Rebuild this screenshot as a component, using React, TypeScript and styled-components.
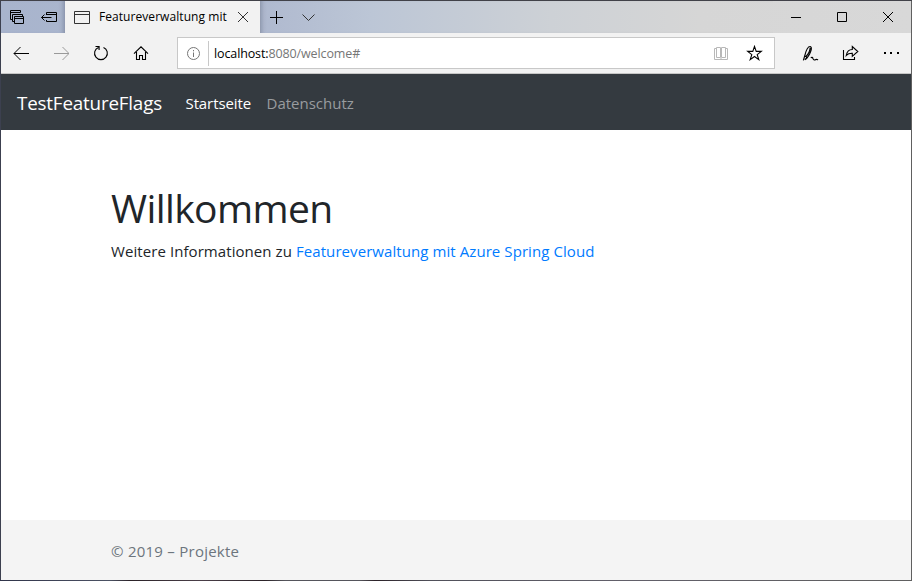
import React from "react";
import styled, { createGlobalStyle } from "styled-components";

const GlobalStyle = createGlobalStyle`
  * { box-sizing: border-box; }
  body {
    margin: 0;
    font-family: "Segoe UI", "Open Sans", "Noto Sans", sans-serif;
    color: #212529;
    background: #fff;
  }
`;

const BrowserWindow = styled.div`
  width: 912px;
  height: 581px;
  display: flex;
  flex-direction: column;
  padding: 1px;
  overflow: hidden;
  background:
    linear-gradient(#3e3f48, #44444a) top / 100% 1px no-repeat,
    linear-gradient(90deg, #30344a 0, #4c5264 110px, #2b2228 130px, #4a3f48 200px, #2b2228 265px, #55555c 285px, #55555c 360px, #2b2228 375px, #50505a 430px, #62606a 620px, #606060 100%) bottom / 100% 1px no-repeat,
    linear-gradient(90deg, #3c404f 50%, #606060 50%);
`;

const TitleBar = styled.header`
  height: 32px;
  flex: none;
  display: flex;
  background: linear-gradient(90deg, #a8b4cd 0, #afb9cf 260px, #bcc6d6 370px, #cdd1d6 550px, #d6d6d6 700px, #d8d8d8 100%);
`;

const TabActions = styled.div`
  width: 64px;
  display: flex;
  box-shadow: inset -5px 0 5px -4px rgba(40, 50, 70, 0.35);
`;

const IconCell = styled.span<{ $width: number; $color?: string }>`
  width: ${(p) => p.$width}px;
  flex: none;
  display: flex;
  align-items: center;
  justify-content: center;
  color: ${(p) => p.$color ?? "#000"};
  svg { display: block; flex: none; }
`;

const Tab = styled.div`
  width: 195px;
  display: flex;
  align-items: center;
  background: #f2f2f2;
`;

const TabTitle = styled.span`
  width: 130px;
  font-size: 12px;
  line-height: 16px;
  letter-spacing: 0.06px;
  white-space: nowrap;
  color: #000;
`;

const NewTabArea = styled.div`
  flex: 1;
  display: flex;
  box-shadow: inset 5px 0 5px -4px rgba(40, 50, 70, 0.35);
`;

const ToolBar = styled.div`
  height: 41px;
  flex: none;
  display: flex;
  align-items: center;
  background: #f2f2f2;
  border-bottom: 1px solid #c6c6c6;
`;

const NavButtons = styled.div`
  width: 176px;
  display: flex;
`;

const AddressBar = styled.div`
  width: 598px;
  height: 32px;
  display: flex;
  align-items: center;
  background: #fff;
  border: 1px solid #c8c8c8;
`;

const Divider = styled.span`
  width: 1px;
  height: 25px;
  background: #c8c8c8;
`;

const Url = styled.span`
  flex: 1;
  padding: 2px 0 0 5px;
  font-size: 12.5px;
  line-height: 18px;
  letter-spacing: -0.12px;
  color: #767676;
  white-space: nowrap;
`;

const Host = styled.span`
  color: #000;
`;

const Tools = styled.div`
  flex: 1;
  display: flex;
  padding-left: 15px;
`;

const NavBar = styled.nav`
  height: 56px;
  flex: none;
  display: flex;
  align-items: center;
  padding: 2px 0 0 16px;
  background: #343a40;
`;

const Brand = styled.span`
  width: 168.5px;
  font-size: 18.8px;
  line-height: 30px;
  letter-spacing: -0.17px;
  color: #fff;
`;

const NavLink = styled.span<{ $active?: boolean }>`
  width: 81px;
  font-size: 15px;
  line-height: 24px;
  letter-spacing: ${(p) => (p.$active ? "-0.1px" : "0")};
  color: ${(p) => (p.$active ? "#fff" : "#999c9f")};
`;

const Main = styled.main`
  flex: 1;
  padding: 54px 110px 0;
  background: #fff;
`;

const Heading = styled.h1`
  margin: 0 0 7px;
  font-size: 39px;
  font-weight: 400;
  line-height: 48px;
  letter-spacing: -0.6px;
`;

const Paragraph = styled.p`
  margin: 0;
  font-size: 15px;
  line-height: 24px;
  letter-spacing: 0.075px;
  white-space: nowrap;
`;

const Link = styled.span`
  color: #007bff;
`;

const Footer = styled.footer`
  height: 60px;
  flex: none;
  padding: 0 110px;
  font-size: 15px;
  line-height: 62px;
  letter-spacing: 0.25px;
  color: #6c757d;
  background: #f4f4f4;
`;

type IconProps = { w?: number; h?: number; children: React.ReactNode; stroke?: number };

const Icon = ({ w = 16, h = 16, stroke = 1, children }: IconProps) => (
  <svg width={w} height={h} viewBox={`0 0 ${w} ${h}`} fill="none" stroke="currentColor" strokeWidth={stroke}>
    {children}
  </svg>
);

export default function App() {
  return (
    <>
      <GlobalStyle />
      <BrowserWindow>
        <TitleBar>
          <TabActions>
            <IconCell $width={32}>
              <Icon><path d="M3.5 10.5h-2v-9h10v2M1.5 3.5h10M5.5 12.5h-2v-7h10v2M5.5 7.5h9v7h-9zM5.5 9.5h9" /></Icon>
            </IconCell>
            <IconCell $width={32}>
              <Icon><path d="M5.5 6V3.5h10v9h-10V11M5.5 5.5h10M.5 8.5h10M3.5 5.5l-3 3 3 3" /></Icon>
            </IconCell>
          </TabActions>
          <Tab>
            <IconCell $width={34} $color="#333">
              <Icon><path d="M.5 2.5h15v12H.5zM.5 5.5h15" /></Icon>
            </IconCell>
            <TabTitle>Featureverwaltung mit</TabTitle>
            <IconCell $width={28} $color="#333">
              <Icon w={10} h={10}><path d="M0 0l10 10M10 0L0 10" /></Icon>
            </IconCell>
          </Tab>
          <NewTabArea>
            <IconCell $width={33}>
              <Icon w={13} h={13}><path d="M6.5 0v13M0 6.5h13" /></Icon>
            </IconCell>
            <IconCell $width={31} $color="#333">
              <Icon w={13} h={7}><path d="M.5.5l6 6 6-6" /></Icon>
            </IconCell>
          </NewTabArea>
          <IconCell $width={46}><Icon w={10} h={10}><path d="M0 5.5h10" /></Icon></IconCell>
          <IconCell $width={46}><Icon w={10} h={10}><path d="M.5.5h9v9h-9z" /></Icon></IconCell>
          <IconCell $width={46}><Icon w={10} h={10}><path d="M0 0l10 10M10 0L0 10" /></Icon></IconCell>
        </TitleBar>

        <ToolBar>
          <NavButtons>
            <IconCell $width={40}><Icon><path d="M1 8.5h15M7.5 2L1 8.5 7.5 15" /></Icon></IconCell>
            <IconCell $width={40} $color="#999"><Icon><path d="M1 8.5h15M9.5 2L16 8.5 9.5 15" /></Icon></IconCell>
            <IconCell $width={40}>
              <Icon stroke={1.1}><path d="M10.5 2.4A6.4 6.4 0 1 1 5.4 2.4M2.5 1.5h3.6v3.6" /></Icon>
            </IconCell>
            <IconCell $width={40}>
              <Icon stroke={1.1}><path d="M1 8.7L8 1.8l7 6.9M3.5 7v7.5h3v-4h3v4h3V7" /></Icon>
            </IconCell>
          </NavButtons>
          <AddressBar>
            <IconCell $width={30} $color="#767676">
              <Icon w={14} h={14}><circle cx="7.5" cy="7.5" r="6" /><path d="M7.5 6.5V11M7.5 4v1.3" /></Icon>
            </IconCell>
            <Divider />
            <Url><Host>localhost:</Host>8080/welcome#</Url>
            <IconCell $width={32} $color="#b8b8b8">
              <Icon><path d="M3.5 2.5h4v10h-4zM8.5 2.5h4v10h-4zM3 3.5H1.5v11h13v-11H13M7.5 13.5h1" /></Icon>
            </IconCell>
            <IconCell $width={34}>
              <Icon w={17} h={16} stroke={1.1}>
                <path d="M8.5 1.4l1.7 5h5.1l-4.1 3.2 1.6 5-4.3-3.1-4.3 3.1 1.6-5L1.7 6.4h5.1z" />
              </Icon>
            </IconCell>
            <IconCell $width={3} />
          </AddressBar>
          <Tools>
            <IconCell $width={40}>
              <Icon w={17} h={17} stroke={1.2}>
                <path d="M1.4 15.4l1.3-4.6C4 5.5 6.4 1.3 8.3 1.5c1.8.3 1.2 3.6-.7 7.5-2 3.8-3.3 5-4.8 5.6M2.7 11.2c1.3-.1 1.9.4 1.9 1.9M8.2 2.8c-.3 3-2.5 7-4 8.3M8.9 13c.8-1.2 1.8-.6 2 .4.4 1.4 1.5 2 2.5 1.3 1.1-.7 1.7-.3 2.6.2" />
              </Icon>
            </IconCell>
            <IconCell $width={40}>
              <Icon w={17} h={16} stroke={1.1}>
                <path d="M1.5 5v9.5h11V12M4.3 10.4C5 6.5 7 4.5 10.3 4.5V1.5l5.5 5-5.5 4.8V8.2c-2.7-.1-4.6.7-6 2.2z" />
              </Icon>
            </IconCell>
            <IconCell $width={41}>
              <Icon><g fill="currentColor" stroke="none"><rect x="1" y="7" width="2" height="2" /><rect x="7" y="7" width="2" height="2" /><rect x="14" y="7" width="2" height="2" /></g></Icon>
            </IconCell>
          </Tools>
        </ToolBar>

        <NavBar>
          <Brand>TestFeatureFlags</Brand>
          <NavLink $active>Startseite</NavLink>
          <NavLink>Datenschutz</NavLink>
        </NavBar>

        <Main>
          <Heading>Willkommen</Heading>
          <Paragraph>Weitere Informationen zu <Link>Featureverwaltung mit Azure Spring Cloud</Link></Paragraph>
        </Main>

        <Footer>© 2019 – Projekte</Footer>
      </BrowserWindow>
    </>
  );
}
